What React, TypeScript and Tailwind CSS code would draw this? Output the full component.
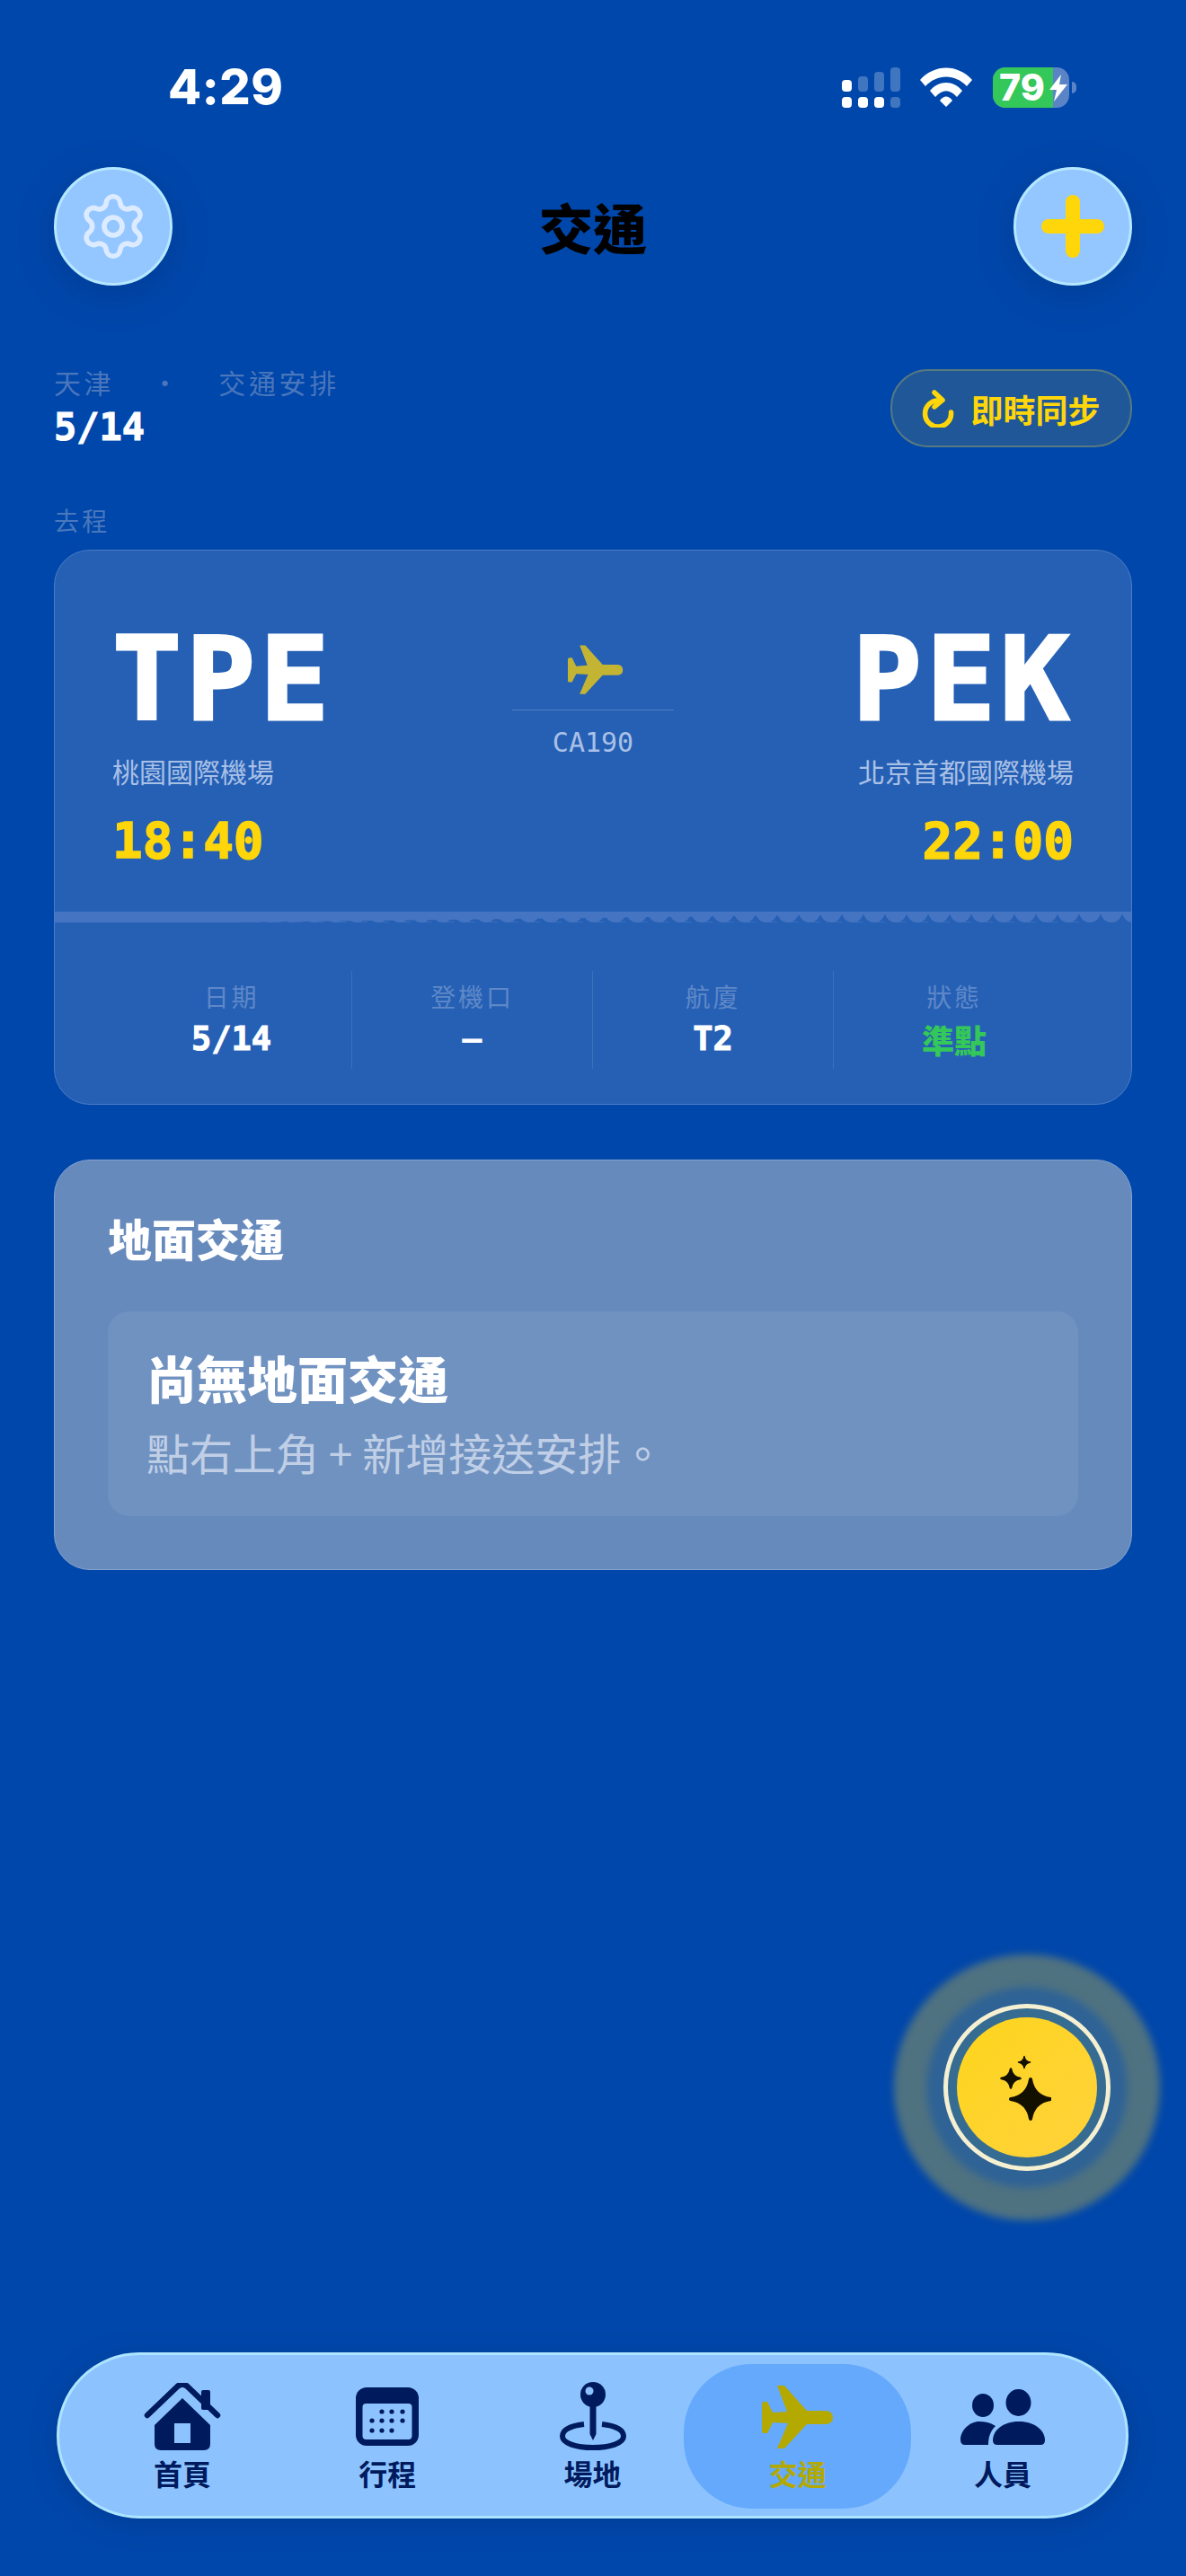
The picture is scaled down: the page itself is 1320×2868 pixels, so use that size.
import React from 'react';
import { Settings } from 'lucide-react';

const mono = "font-['DejaVu_Sans_Mono',monospace]";

// scalloped tear line between the flight and the details
const TearLine = () => {
    const shapes: React.ReactNode[] = [];
    for (let i = 0; i < 51; i++) {
        const cx = i * 24;
        const t = i / 50;
        const fill = t < 0.15 ? 12 : Math.max(3, 12 - (t - 0.15) * 15);
        shapes.push(<circle key={`c${i}`} cx={cx} cy={0} r={12} />);
        shapes.push(<rect key={`r${i}`} x={cx} y={0} width={24} height={fill} />);
        if (t < 0.95) shapes.push(<rect key={`d${i}`} x={cx} y={11} width={12} height={1} opacity={0.7} />);
    }
    return (
        <svg width="1198" height="12" viewBox="0 0 1198 12" className="block">
            <g fill="#4575c2">{shapes}</g>
        </svg>
    );
};

const PlaneIcon = ({ className }: { className?: string }) => (
    <svg viewBox="0 0 80 70" className={className} fill="currentColor">
        <path d="M0 20 Q0 18 3 18 L6 18 L12 30 L28 29 L17 0 L25 0 L50 28 L70 28 Q79 28 79 35.5 Q79 43 70 43 L50 43 L25 70 L17 70 L29 42 L12 41 L6 53 L3 53 Q0 53 0 51 Z" />
    </svg>
);

const HomeIcon = () => (
    <svg viewBox="0 0 86 75" className="w-[86px] h-[75px]">
        <rect x="64" y="8" width="10" height="22" rx="2" fill="#001a5e" />
        <path d="M43 17 L74 47 L74 68 Q74 75 67 75 L19 75 Q12 75 12 68 L12 47 Z" fill="#001a5e" />
        <path d="M4 36 L38 3.5 Q43 0 48 3.5 L82 36" fill="none" stroke="#001a5e" strokeWidth="6.5" strokeLinecap="round" strokeLinejoin="round" />
        <rect x="34" y="45" width="18" height="22" fill="#8cc3ff" />
    </svg>
);

const CalendarIcon = () => (
    <svg viewBox="0 0 70 65" className="w-[70px] h-[65px] mb-[5px]">
        <rect width="70" height="65" rx="12" fill="#001a5e" />
        <rect x="7.5" y="18" width="55" height="40" rx="4" fill="#8cc3ff" />
        {[[29, 27], [40, 27], [52, 27], [18, 37], [29, 37], [40, 37], [52, 37], [18, 48], [29, 48], [40, 48]].map(([x, y]) => (
            <circle key={`${x}-${y}`} cx={x} cy={y} r="2.6" fill="#001a5e" />
        ))}
    </svg>
);

const PinIcon = () => (
    <svg viewBox="0 0 74 76" className="w-[74px] h-[76px]">
        <path d="M27 47 C10 49 3 54 3 60.5 C3 68 18 73 37 73 C56 73 71 68 71 60.5 C71 54 64 49 47 47" fill="none" stroke="#001a5e" strokeWidth="6" />
        <ellipse cx="37" cy="14" rx="14" ry="14" fill="#001a5e" />
        <path d="M33.5 24 L40.5 24 L40.5 58 L37 65 L33.5 58 Z" fill="#001a5e" />
        <ellipse cx="33" cy="10" rx="4.5" ry="4.5" fill="#8cc3ff" />
    </svg>
);

const PeopleIcon = () => (
    <svg viewBox="0 0 94 62" className="w-[94px] h-[62px] mb-[6px]">
        <ellipse cx="25" cy="18" rx="12" ry="13" fill="#001a5e" />
        <ellipse cx="64.5" cy="15" rx="14" ry="15" fill="#001a5e" />
        <path d="M0 56 C0 46 10 36 21 36 C27 36 33 37 39 41 C34 46 31 52 31 62 L5 62 Q0 62 0 56 Z" fill="#001a5e" />
        <path d="M36 57 C36 46 47 36 65 36 C83 36 94 46 94 57 Q94 62 89 62 L41 62 Q36 62 36 57 Z" fill="#001a5e" />
    </svg>
);

const SyncIcon = () => (
    <svg viewBox="0 0 36 42" className="w-[36px] h-[42px]" fill="none" stroke="#ffd60a" strokeWidth="5.5" strokeLinecap="round" strokeLinejoin="round">
        <path d="M18 12 A14.5 14.5 0 1 0 32.5 25" />
        <path d="M14 3 L23 11.5 L14 19" />
    </svg>
);

// four point star used in the assistant button
const star = (cx: number, cy: number, r: number) => {
    const k = r * 0.14;
    return `M${cx} ${cy - r} Q${cx + k} ${cy - k} ${cx + r} ${cy} Q${cx + k} ${cy + k} ${cx} ${cy + r} Q${cx - k} ${cy + k} ${cx - r} ${cy} Q${cx - k} ${cy - k} ${cx} ${cy - r} Z`;
};

const Sparkles = () => (
    <svg viewBox="0 0 60 76" className="w-[60px] h-[76px] mr-[6px]" fill="#141000" stroke="#141000" strokeLinejoin="round">
        <path d={star(37, 51, 22)} strokeWidth="4" />
        <path d={star(15, 28, 10.5)} strokeWidth="2.5" />
        <path d={star(30, 10, 6.5)} strokeWidth="1.5" />
    </svg>
);

const StatusBar = () => (
    <div className="flex items-center justify-between h-[186px] pl-[187px] pr-[122px] pt-[8px] text-white">
        <span className="font-['Inter',sans-serif] font-extrabold text-[54px] leading-none tracking-[0.01em]">4:29</span>
        <div className="flex items-center">
            <div className="grid grid-cols-4 gap-x-[7px] gap-y-[6px] w-[65px] items-end">
                <div className="h-[13px] rounded-[4px] bg-white" />
                <div className="h-[17px] rounded-[4px] bg-white/25" />
                <div className="h-[22px] rounded-[4px] bg-white/25" />
                <div className="h-[27px] rounded-[4px] bg-white/25" />
                <div className="h-[12px] rounded-[4px] bg-white" />
                <div className="h-[12px] rounded-[4px] bg-white" />
                <div className="h-[12px] rounded-[4px] bg-white" />
                <div className="h-[12px] rounded-[4px] bg-white/25" />
            </div>
            <svg viewBox="0 0 58 44" className="w-[58px] h-[44px] ml-[22px]" fill="#fff">
                <path d="M0 14 C16 -4 42 -4 58 14 L52 21 C39 7 19 7 6 21 Z" />
                <path d="M11 26 C21 14 37 14 47 26 L41 33 C33 24 25 24 17 33 Z" />
                <path d="M22 37 C26 31 32 31 36 37 L29 44 Z" />
            </svg>
            <div className="relative flex items-center w-[85px] h-[45px] ml-[23px] rounded-[14px] bg-[#5b84c6]">
                <div className="h-full w-[67px] rounded-l-[14px] bg-[#34c759]" />
                <span className="absolute left-[7px] top-[-4px] font-['Inter',sans-serif] font-extrabold text-[41px] leading-[52px]">79</span>
                <svg viewBox="0 0 20 30" className="absolute left-[63px] top-[8px] w-[20px] h-[30px]" fill="#fff">
                    <path d="M13 0 L0 17 L8 17 L5 30 L20 11 L11 11 Z" />
                </svg>
            </div>
            <div className="w-[5px] h-[13px] ml-[3px] rounded-r-full bg-[#5b84c6]" />
        </div>
    </div>
);

const RoundButton = ({ children }: { children: React.ReactNode }) => (
    <button className="flex items-center justify-center size-[132px] rounded-full bg-[#94c6ff] border-[3px] border-[#b5e8ff] shadow-[0_10px_40px_rgba(0,30,90,0.25)]">
        {children}
    </button>
);

const DetailCell = ({ label, value, valueClass, divider }: { label: string; value: string; valueClass: string; divider?: boolean }) => (
    <div className={`flex flex-col items-center h-[109px] pt-[14px] ${divider ? 'border-r border-white/10' : ''}`}>
        <span className="text-[28px] leading-[28px] tracking-[0.1em] text-[#5f88c8]">{label}</span>
        <span className={`mt-[12px] leading-[44px] ${valueClass}`}>{value}</span>
    </div>
);

const Tab = ({ icon, label, active }: { icon: React.ReactNode; label: string; active?: boolean }) => (
    <div className={`relative flex-1 flex flex-col items-center ${active ? 'text-[#b3a900]' : 'text-[#001a5e]'}`}>
        {active && <div className="absolute -top-[20px] w-[253px] h-[161px] rounded-[76px] bg-[#65a9fd]" />}
        <div className="relative flex items-end justify-center h-[76px]">{icon}</div>
        <span className="relative mt-[3px] text-[32px] leading-[44px] font-bold">{label}</span>
    </div>
);

export default function App() {
    return (
        <div className="relative w-[1320px] h-[2868px] overflow-hidden bg-[#0047ab] font-['Noto_Sans_CJK_TC','Noto_Sans',sans-serif]">
            <StatusBar />

            {/* Header */}
            <div className="flex items-center justify-between px-[60px]">
                <RoundButton>
                    <Settings size={80} strokeWidth={1.7} className="text-[#dcebff]" />
                </RoundButton>
                <h1 className="text-[60px] leading-none font-black text-black">交通</h1>
                <RoundButton>
                    <svg viewBox="0 0 70 70" className="w-[70px] h-[70px]" fill="#ffd60a">
                        <rect x="27" width="16" height="70" rx="8" />
                        <rect y="27" width="70" height="16" rx="8" />
                    </svg>
                </RoundButton>
            </div>

            {/* Trip summary */}
            <div className="flex items-start justify-between mt-[87px] px-[60px]">
                <div>
                    <div className="text-[30px] leading-[40px] tracking-[0.12em] whitespace-pre text-[#4a76bc]">天津    ·    交通安排</div>
                    <div className={`${mono} mt-[8px] text-[42px] leading-[46px] font-bold text-white [-webkit-text-stroke:1px_#fff]`}>5/14</div>
                </div>
                <button className="flex items-center justify-center gap-[18px] w-[269px] h-[87px] mt-[6px] rounded-[42px] bg-[#1f5799] border-2 border-[#577a80]">
                    <SyncIcon />
                    <span className="text-[36px] leading-none font-bold text-[#ffd60a]">即時同步</span>
                </button>
            </div>

            <div className="mt-[62px] px-[60px] text-[28px] leading-[36px] tracking-[0.12em] text-[#4a78bd]">去程</div>

            {/* Flight card */}
            <div className="mt-[15px] mx-[60px] h-[618px] rounded-[40px] bg-[#2560b5] border border-[#4b7cc4] overflow-hidden">
                <div className="flex h-[402px] px-[64px] pt-[79px]">
                    <div className="flex-1">
                        <div className={`${mono} text-[128px] leading-[130px] font-bold text-white tracking-[5px] [-webkit-text-stroke:3px_#fff]`}>TPE</div>
                        <div className="mt-[16px] text-[30px] leading-[40px] text-[#a9c0e6]">桃園國際機場</div>
                        <div className={`${mono} mt-[26px] text-[56px] leading-[64px] font-bold text-[#ffd60a] [-webkit-text-stroke:1.5px_#ffd60a]`}>18:40</div>
                    </div>
                    <div className="flex flex-col items-center w-[180px] pt-[26px]">
                        <PlaneIcon className="w-[62px] h-[55px] ml-[6px] text-[#c3b434]" />
                        <div className="w-[180px] h-px mt-[17px] bg-white/20" />
                        <div className={`${mono} mt-[18px] text-[30px] leading-[36px] text-[#a9c0e6]`}>CA190</div>
                    </div>
                    <div className="flex-1 flex flex-col items-end">
                        <div className={`${mono} text-[128px] leading-[130px] font-bold text-white tracking-[5px] [-webkit-text-stroke:3px_#fff]`}>PEK</div>
                        <div className="mt-[16px] text-[30px] leading-[40px] text-[#a9c0e6]">北京首都國際機場</div>
                        <div className={`${mono} mt-[26px] text-[56px] leading-[64px] font-bold text-[#ffd60a] [-webkit-text-stroke:1.5px_#ffd60a]`}>22:00</div>
                    </div>
                </div>
                <TearLine />
                <div className="grid grid-cols-4 mt-[54px] px-[63px]">
                    <DetailCell divider label="日期" value="5/14" valueClass={`${mono} text-[37px] font-bold text-white [-webkit-text-stroke:1px_#fff]`} />
                    <DetailCell divider label="登機口" value="—" valueClass={`${mono} text-[37px] font-bold text-white`} />
                    <DetailCell divider label="航廈" value="T2" valueClass={`${mono} text-[37px] font-bold text-white [-webkit-text-stroke:1px_#fff]`} />
                    <DetailCell label="狀態" value="準點" valueClass="text-[36px] font-black text-[#34c759]" />
                </div>
            </div>

            {/* Ground transport */}
            <div className="mt-[61px] mx-[60px] h-[457px] rounded-[40px] bg-[#678abd] border border-[#86a3cd] px-[59px] pt-[56px]">
                <h2 className="text-[49px] leading-[60px] font-black text-white">地面交通</h2>
                <div className="mt-[52px] h-[228px] rounded-[24px] bg-[#7092c1] px-[43px] pt-[37px]">
                    <div className="text-[56px] leading-[72px] font-black text-white">尚無地面交通</div>
                    <div className="mt-[15px] text-[48px] leading-[64px] text-[#c0cfe6]">點右上角 + 新增接送安排。</div>
                </div>
            </div>

            {/* Assistant button */}
            <div className="absolute left-[995px] top-[2176px] size-[296px]">
                <div className="absolute inset-0 rounded-full bg-[#4f7280] blur-[4px]" />
                <div className="absolute inset-[36px] rounded-full bg-[#2f6395] blur-[4px]" />
                <div className="absolute inset-[55px] rounded-full border-[5px] border-[#f5f0d2] bg-[#366c92]" />
                <div className="absolute inset-[70px] flex items-center justify-center rounded-full bg-gradient-to-br from-[#fdd519] to-[#ffd23a]">
                    <Sparkles />
                </div>
            </div>

            {/* Bottom navigation */}
            <div className="absolute left-[63px] top-[2619px] flex items-center w-[1193px] h-[185px] px-[23px] pt-[4px] rounded-[92px] bg-[#8cc3ff] border-[3px] border-[#ade5ff] shadow-[0_6px_30px_rgba(0,30,90,0.25)]">
                <Tab icon={<HomeIcon />} label="首頁" />
                <Tab icon={<CalendarIcon />} label="行程" />
                <Tab icon={<PinIcon />} label="場地" />
                <Tab active icon={<PlaneIcon className="w-[80px] h-[70px] mb-[2px]" />} label="交通" />
                <Tab icon={<PeopleIcon />} label="人員" />
            </div>
        </div>
    );
}
